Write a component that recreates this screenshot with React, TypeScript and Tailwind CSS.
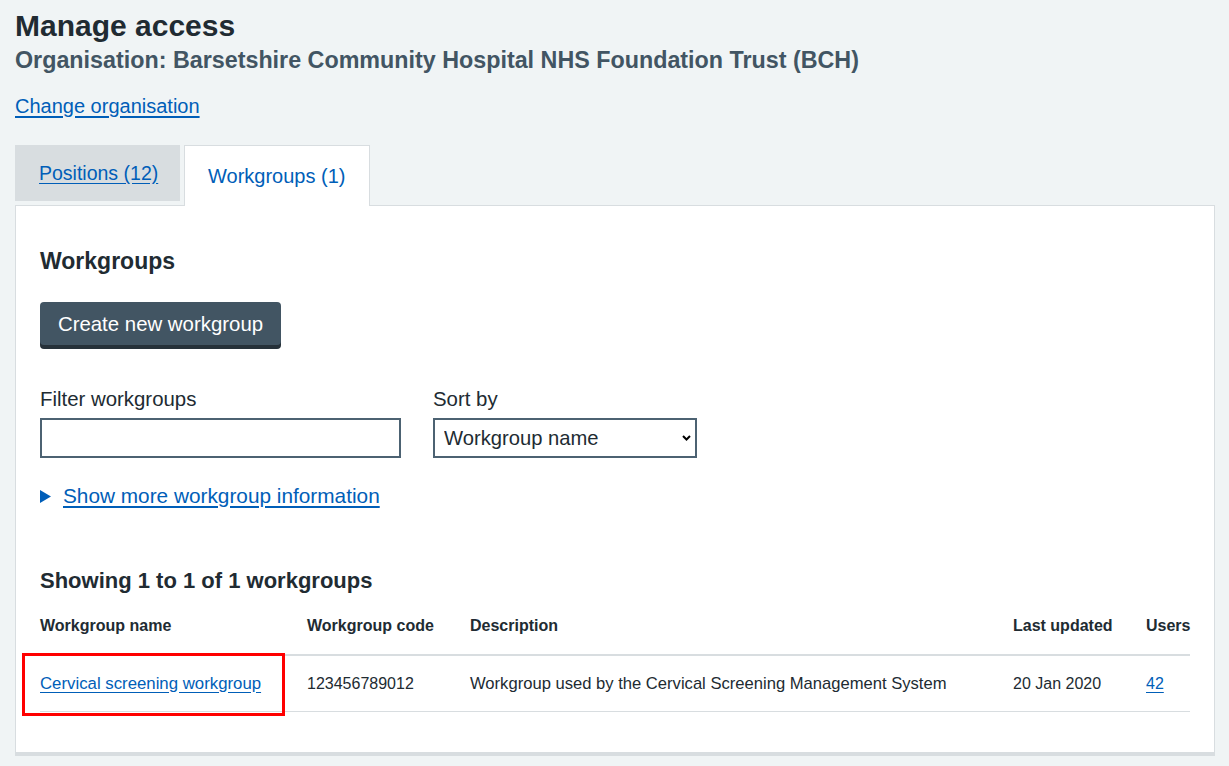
import React from "react";

export default function App() {
  return (
    <div className="min-h-screen bg-[#f0f4f5] pl-[15px] pr-[14px] pt-[8px] pb-[10px] font-['Liberation_Sans',Arial,sans-serif] text-[#212b32]">
      <h1 className="text-[30px] leading-[36px] font-bold text-[#212b32]">Manage access</h1>
      <p className="mt-[1px] text-[23.3px] leading-[30px] font-bold text-[#425563]">
        Organisation: Barsetshire Community Hospital NHS Foundation Trust (BCH)
      </p>
      <div className="mt-[19px] leading-[24px]">
        <a href="#" className="text-[20px] leading-[24px] text-[#005eb8] underline underline-offset-[3px]">
          Change organisation
        </a>
      </div>

      <div className="mt-[25px] flex h-[60px] items-start gap-[4px]">
        <div className="flex h-[56px] w-[165px] items-center bg-[#d8dde0] pl-[24px]">
          <a href="#" className="text-[19.5px] leading-[24px] text-[#005eb8] underline underline-offset-[3px]">
            Positions (12)
          </a>
        </div>
        <div className="relative z-10 flex h-[61px] w-[186px] items-center border border-b-0 border-[#d8dde0] bg-white pl-[23px]">
          <span className="text-[20px] leading-[24px] text-[#005eb8]">Workgroups (1)</span>
        </div>
      </div>

      <div className="border border-b-4 border-[#d8dde0] bg-white px-[24px] pt-[40px] pb-[40px]">
        <h2 className="text-[23px] leading-[30px] font-bold">Workgroups</h2>

        <button className="mt-[26px] flex h-[43px] w-[241px] items-center justify-center rounded-[4px] bg-[#425563] text-[20.4px] leading-[24px] text-white shadow-[0_4px_0_#263139]">
          Create new workgroup
        </button>

        <div className="mt-[42px] flex gap-[32px]">
          <div>
            <label className="block text-[20.4px] leading-[24px]">Filter workgroups</label>
            <input
              type="text"
              className="mt-[7px] block h-[40px] w-[361px] border-2 border-[#4c6272] bg-white px-[8px] text-[20px] outline-none"
            />
          </div>
          <div>
            <label className="block text-[20.4px] leading-[24px]">Sort by</label>
            <div className="relative mt-[7px] h-[40px] w-[264px]">
              <select className="block h-[40px] w-[264px] appearance-none border-2 border-[#4c6272] bg-white pl-[9px] text-[20.2px] leading-[24px] text-[#212b32] outline-none">
                <option>Workgroup name</option>
              </select>
              <svg
                className="pointer-events-none absolute right-[6px] top-[17px]"
                width="9"
                height="6"
                viewBox="0 0 9 6"
              >
                <path d="M1 1 L4.5 4.5 L8 1" fill="none" stroke="#000" strokeWidth="2" />
              </svg>
            </div>
          </div>
        </div>

        <div className="mt-[26px] flex h-[24px] items-center">
          <svg width="11" height="13" viewBox="0 0 11 13" className="mr-[12px] shrink-0">
            <path d="M0 0 L11 6.5 L0 13 Z" fill="#005eb8" />
          </svg>
          <a href="#" className="text-[20.8px] leading-[24px] text-[#005eb8] underline underline-offset-[3px]">
            Show more workgroup information
          </a>
        </div>

        <h2 className="mt-[59px] text-[22px] leading-[28px] font-bold">Showing 1 to 1 of 1 workgroups</h2>

        <table className="mt-[7px] w-full table-fixed border-collapse">
          <colgroup>
            <col className="w-[267px]" />
            <col className="w-[163px]" />
            <col className="w-[543px]" />
            <col className="w-[133px]" />
            <col />
          </colgroup>
          <thead>
            <tr>
              <th className="border-b-2 border-[#d8dde0] pt-[12px] pb-[16px] pr-[16px] text-left text-[16px] leading-[24px] font-bold">
                Workgroup name
              </th>
              <th className="border-b-2 border-[#d8dde0] pt-[12px] pb-[16px] pr-[16px] text-left text-[16px] leading-[24px] font-bold">
                Workgroup code
              </th>
              <th className="border-b-2 border-[#d8dde0] pt-[12px] pb-[16px] pr-[16px] text-left text-[16px] leading-[24px] font-bold">
                Description
              </th>
              <th className="border-b-2 border-[#d8dde0] pt-[12px] pb-[16px] pr-[16px] text-left text-[16px] leading-[24px] font-bold">
                Last updated
              </th>
              <th className="border-b-2 border-[#d8dde0] pt-[12px] pb-[16px] text-left text-[16px] leading-[24px] font-bold">
                Users
              </th>
            </tr>
          </thead>
          <tbody>
            <tr>
              <td className="relative border-b border-[#d8dde0] pt-[15.5px] pb-[15.5px] pr-[16px] text-[16.8px] leading-[24px]">
                <a href="#" className="text-[#005eb8] underline underline-offset-[3px]">
                  Cervical screening workgroup
                </a>
                <div className="pointer-events-none absolute left-[-18px] top-[-3px] h-[63px] w-[263px] border-[3px] border-[#ff0000]" />
              </td>
              <td className="border-b border-[#d8dde0] pt-[15.5px] pb-[15.5px] pr-[16px] text-[16px] leading-[24px]">
                123456789012
              </td>
              <td className="border-b border-[#d8dde0] pt-[15.5px] pb-[15.5px] pr-[16px] text-[16.6px] leading-[24px]">
                Workgroup used by the Cervical Screening Management System
              </td>
              <td className="border-b border-[#d8dde0] pt-[15.5px] pb-[15.5px] pr-[16px] text-[16px] leading-[24px]">
                20 Jan 2020
              </td>
              <td className="border-b border-[#d8dde0] pt-[15.5px] pb-[15.5px] text-[16px] leading-[24px]">
                <a href="#" className="text-[#005eb8] underline underline-offset-[3px]">
                  42
                </a>
              </td>
            </tr>
          </tbody>
        </table>
      </div>
    </div>
  );
}
